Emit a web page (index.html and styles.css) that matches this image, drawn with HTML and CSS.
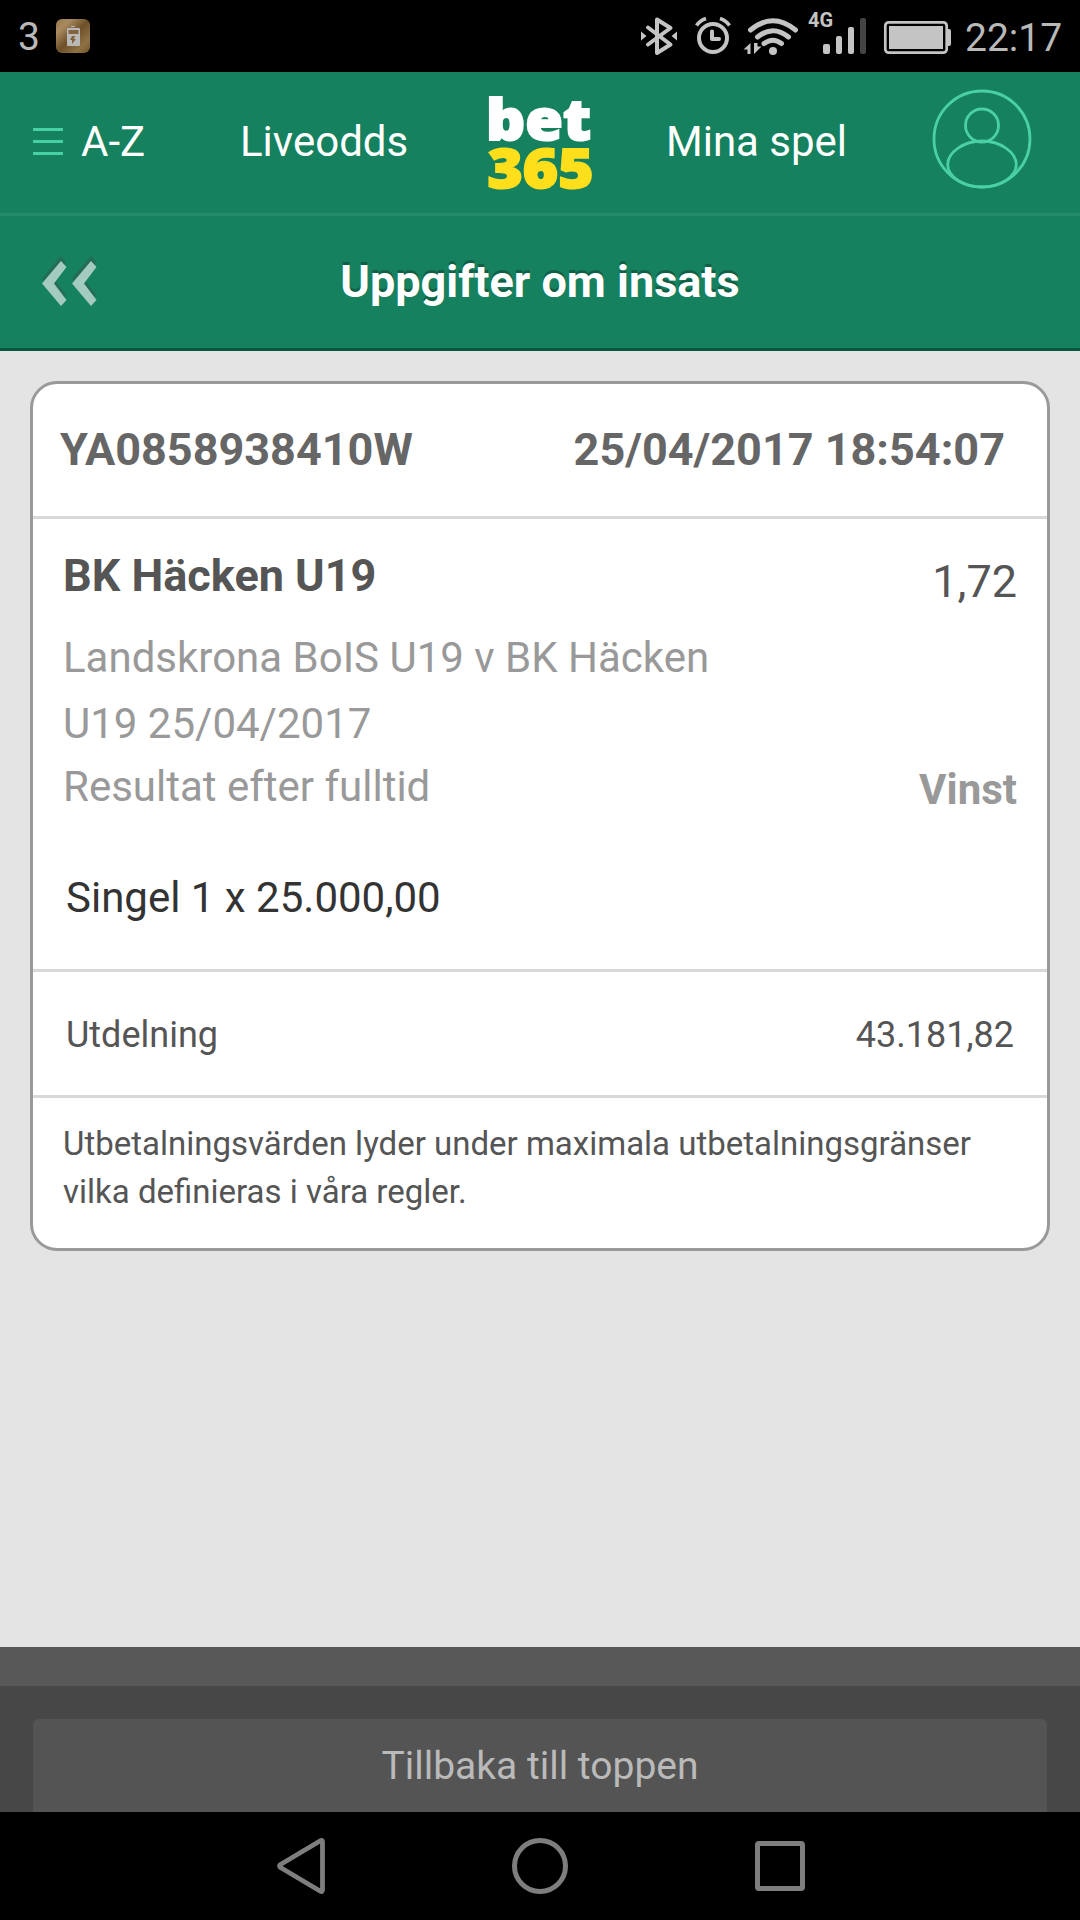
FILE: index.html
```html
<!DOCTYPE html>
<html lang="sv">
	<head>
		<meta charset="UTF-8" />
		<meta name="viewport" content="width=device-width, initial-scale=1.0" />
		<title>Uppgifter om insats</title>
		<link rel="stylesheet" href="styles.css">
	</head>
	<body>
		<div class="status-bar">
			<span class="count">3</span>
			<svg class="app-icon" width="34" height="34" viewBox="0 0 34 34">
				<defs>
					<linearGradient id="bronze" x1="0" y1="0" x2="1" y2="1">
						<stop offset="0" stop-color="#9a7648" />
						<stop offset="0.22" stop-color="#a98a60" />
						<stop offset="0.5" stop-color="#6d5029" />
						<stop offset="0.78" stop-color="#8f7244" />
						<stop offset="1" stop-color="#6f5228" />
					</linearGradient>
				</defs>
				<rect width="34" height="34" rx="6" fill="url(#bronze)" />
				<path d="M15 7h4v1h-4z" fill="#b9b9b9" />
				<rect x="11" y="9" width="13" height="18" rx="1" fill="#b9b9b9" />
				<path d="M12.500 11h10v4h-10z" fill="#84643a" />
				<path d="M16 17h3l-1 3h2l-4 5v-4h-2z" fill="#84643a" />
			</svg>

			<div class="status-icons">
				<!-- bluetooth -->
				<svg width="56" height="72" viewBox="636 0 56 72">
					<path d="M648 27.500L670.500 44.500L657 53V19.500L670.500 28L648 44.500" fill="none" stroke="#c4c4c4" stroke-width="4" stroke-linejoin="round" stroke-linecap="round" />
					<path d="M641 31.500L646.500 36L641 40.500zM677 31.500L671.500 36L677 40.500z" fill="#c4c4c4" />
				</svg>
				<!-- alarm -->
				<svg width="50" height="72" viewBox="692 0 50 72">
					<g fill="none" stroke="#c4c4c4">
						<circle cx="713" cy="38" r="14" stroke-width="4" />
						<path d="M712 31.500V39H719" stroke-width="4" stroke-linecap="round" stroke-linejoin="round" />
						<path d="M696.500 25.500Q700 20.500 706 18.500M729.500 25.500Q726 20.500 720 18.500" stroke-width="3.500" />
					</g>
				</svg>
				<!-- wifi -->
				<svg width="62" height="72" viewBox="742 0 62 72">
					<g fill="none" stroke="#c4c4c4" stroke-width="5" stroke-linecap="round">
						<path d="M750.500 30Q773 11.500 795.500 30" />
						<path d="M757.500 37Q773 24.500 788.500 37" />
						<path d="M764 43.500Q773 37 781.500 43.500" />
					</g>
					<circle cx="773" cy="51" r="4" fill="#c4c4c4" />
					<path d="M743.500 49.500L750.500 43V54H747.500V49.500zM754 43H757.500V46.500H761.500L754 54z" fill="#c4c4c4" />
				</svg>
				<!-- mobile signal -->
				<svg width="76" height="72" viewBox="804 0 76 72">
					<text class="network" x="808" y="26.700">4G</text>
					<rect x="823" y="44" width="7" height="10" rx="2" fill="#c4c4c4" />
					<rect x="836" y="36" width="6" height="18" rx="2" fill="#c4c4c4" />
					<rect x="848" y="27" width="6" height="27" rx="2" fill="#c4c4c4" />
					<rect x="860" y="18" width="6" height="36" rx="2" fill="#444" />
				</svg>
				<!-- battery -->
				<svg width="85" height="72" viewBox="880 0 85 72">
					<rect x="885.300" y="22.300" width="61.400" height="30.400" rx="3.500" fill="none" stroke="#c4c4c4" stroke-width="2.700" />
					<rect x="889" y="26" width="54" height="23" fill="#c4c4c4" />
					<path d="M947 29h2q2 0 2 2v13q0 2-2 2h-2z" fill="#c4c4c4" />
				</svg>
				<span class="clock">22:17</span>
			</div>
		</div>

		<header>
			<nav class="top-nav">
				<a class="menu">
					<svg width="30" height="27" viewBox="0 0 30 27">
						<path d="M0 1.500h30M0 13.500h30M0 25.500h30" stroke="#47cfa5" stroke-width="3" />
					</svg>
					A-Z
				</a>
				<a class="live">Liveodds</a>
				<svg class="logo" width="108" height="100" viewBox="486 92 108 100">
					<text class="bet" x="486" y="139" textLength="105" lengthAdjust="spacingAndGlyphs">bet</text>
					<text class="num" x="487.500" y="186.500" textLength="106" lengthAdjust="spacingAndGlyphs">365</text>
				</svg>
				<a class="bets">Mina spel</a>
				<svg class="avatar" width="100" height="100" viewBox="0 0 100 100">
					<g fill="none" stroke="#4acfa6" stroke-width="2.800">
						<circle cx="50" cy="50" r="48" />
						<circle cx="50" cy="36.500" r="16.500" />
						<path d="M50 52C68 52 84.300 63 84.300 75.500C84.300 88 68 98 50 98C32 98 15.700 88 15.700 75.500C15.700 63 32 52 50 52z" />
					</g>
				</svg>
			</nav>
			<div class="title-bar">
				<svg class="back" width="60" height="54" viewBox="40 254 60 54">
					<path d="M61 256L66 262L54 278.500L66 295L61 301L42 278.500zM91 256L96 262L84 278.500L96 295L91 301L72 278.500z" fill="#246c58" />
					<path d="M61 261L66.500 267L54 283.500L66.500 300L61 306L42 283.500zM91 261L96.500 267L84 283.500L96.500 300L91 306L72 283.500z" fill="#a4cbbf" />
				</svg>
				<h1>Uppgifter om insats</h1>
			</div>
		</header>

		<main>
			<section class="slip">
				<div class="slip-head">
					<span>YA0858938410W</span>
					<span>25/04/2017 18:54:07</span>
				</div>
				<div class="selection">
					<div class="row pick">
						<h2>BK Häcken U19</h2>
						<span class="odds">1,72</span>
					</div>
					<p class="match">Landskrona BoIS U19 v BK Häcken U19 25/04/2017</p>
					<div class="row market">
						<span>Resultat efter fulltid</span>
						<span class="result">Vinst</span>
					</div>
					<p class="stake">Singel 1 x 25.000,00</p>
				</div>
				<div class="payout">
					<span>Utdelning</span>
					<span>43.181,82</span>
				</div>
				<p class="note">Utbetalningsvärden lyder under maximala utbetalningsgränser vilka definieras i våra regler.</p>
			</section>
		</main>

		<footer>
			<a class="to-top">Tillbaka till toppen</a>
		</footer>

		<div class="android-nav">
			<svg width="48" height="56" viewBox="0 0 48 56">
				<path d="M45.500 4Q45.500 1.500 43 3L3.500 26.500Q1.500 28 3.500 29.500L43 53Q45.500 54.500 45.500 52z" fill="none" stroke="#7e7e7e" stroke-width="4.800" stroke-linejoin="round" />
			</svg>
			<span class="home"></span>
			<span class="recent"></span>
		</div>
	</body>
</html>
```

FILE: styles.css
```css
:root {
	--green: #15815e;
	--green-line: #268969;
	--green-dark: #07583f;
	--page: #e4e4e4;
	--line: #d9d9d9;
	--border: #999;
}

* {
	margin: 0;
	padding: 0;
	box-sizing: border-box;
}

body {
	display: flex;
	flex-direction: column;
	height: 1920px;
	font-family: Roboto, "Liberation Sans", sans-serif;
	background: var(--page);
	overflow: hidden;
}

svg {
	display: block;
	flex: none;
}

/* Phone status bar */
.status-bar {
	display: flex;
	align-items: center;
	height: 72px;
	padding: 0 19px 0 18px;
	background: #000;
	color: #b9b9b9;
	font-size: 39px;
}

.count {
	width: 38px;
	padding-top: 2px;
}

.status-icons {
	display: flex;
	align-items: center;
	margin-left: auto;
}

.network {
	font-size: 20px;
	font-weight: 700;
	fill: #c4c4c4;
}

.clock {
	width: 96px;
	padding-top: 3px;
	white-space: nowrap;
}

/* Site header */
header {
	background: var(--green);
	color: #fff;
}

.top-nav {
	display: flex;
	align-items: center;
	height: 144px;
	padding: 0 48px 0 33px;
	border-bottom: 3px solid var(--green-line);
	font-size: 42px;
}

.top-nav a {
	padding-bottom: 2px;
	white-space: nowrap;
}

.menu {
	display: flex;
	align-items: center;
	gap: 18px;
	width: 207px;
}

.live {
	width: 246px;
}

.logo {
	width: 108px;
	overflow: visible;
	font-family: "Open Sans", "Noto Sans", sans-serif;
	font-size: 57px;
	font-weight: 800;
	stroke-width: 2px;
}

.bet {
	fill: #fff;
	stroke: #fff;
}

.num {
	font-size: 55px;
	fill: #ffdf1b;
	stroke: #ffdf1b;
}

.bets {
	margin-left: 72px;
}

.avatar {
	margin: -7px 0 0 auto;
}

.title-bar {
	display: grid;
	grid-template-columns: 60px 1fr 60px;
	align-items: center;
	height: 135px;
	padding: 0 40px 2px;
	border-bottom: 3px solid var(--green-dark);
}

h1 {
	font-size: 45px;
	font-weight: 700;
	text-align: center;
	text-shadow: 0 -3px 0 rgba(0, 0, 0, 0.25);
}

/* Bet slip */
main {
	flex: 1;
	padding: 30px;
}

.slip {
	border: 3px solid var(--border);
	border-radius: 27px;
	background: #fff;
	color: #555;
}

.slip-head {
	display: flex;
	justify-content: space-between;
	align-items: center;
	height: 135px;
	padding: 0 42px 2px 27px;
	border-bottom: 3px solid var(--line);
	color: #666;
	font-size: 45px;
	font-weight: 700;
}

.selection {
	height: 453px;
	padding: 27px 30px 0;
	border-bottom: 3px solid var(--line);
	font-size: 42px;
}

.row {
	display: flex;
	justify-content: space-between;
}

.pick {
	height: 79px;
	font-size: 45px;
	line-height: 60px;
}

h2 {
	font-size: inherit;
}

.odds {
	padding-top: 6px;
}

.match {
	width: 700px;
	color: #999;
	line-height: 66px;
}

.market {
	height: 60px;
	color: #999;
	line-height: 60px;
}

.result {
	padding-top: 3px;
	font-weight: 700;
}

.stake {
	margin-top: 51px;
	padding-left: 3px;
	color: #333;
	line-height: 60px;
}

.payout {
	display: flex;
	justify-content: space-between;
	align-items: center;
	height: 126px;
	padding: 2px 33px 0;
	border-bottom: 3px solid var(--line);
	font-size: 36px;
}

.note {
	height: 150px;
	padding: 22px 30px 0;
	font-size: 33px;
	line-height: 48px;
}

/* Page footer, cut off by the navigation bar */
footer {
	height: 165px;
	padding: 33px 33px 0;
	border-top: 39px solid #585858;
	background: #474747;
}

.to-top {
	display: block;
	height: 93px;
	border-radius: 6px 6px 0 0;
	background: #545454;
	color: #bababa;
	font-size: 39px;
	line-height: 95px;
	text-align: center;
}

.android-nav {
	display: flex;
	justify-content: center;
	align-items: center;
	gap: 187px;
	height: 108px;
	padding-left: 2px;
	background: #000;
}

.home {
	width: 56px;
	height: 56px;
	border: 5px solid #7e7e7e;
	border-radius: 50%;
}

.recent {
	width: 50px;
	height: 50px;
	border: 5px solid #7e7e7e;
	border-radius: 4px;
}
```
